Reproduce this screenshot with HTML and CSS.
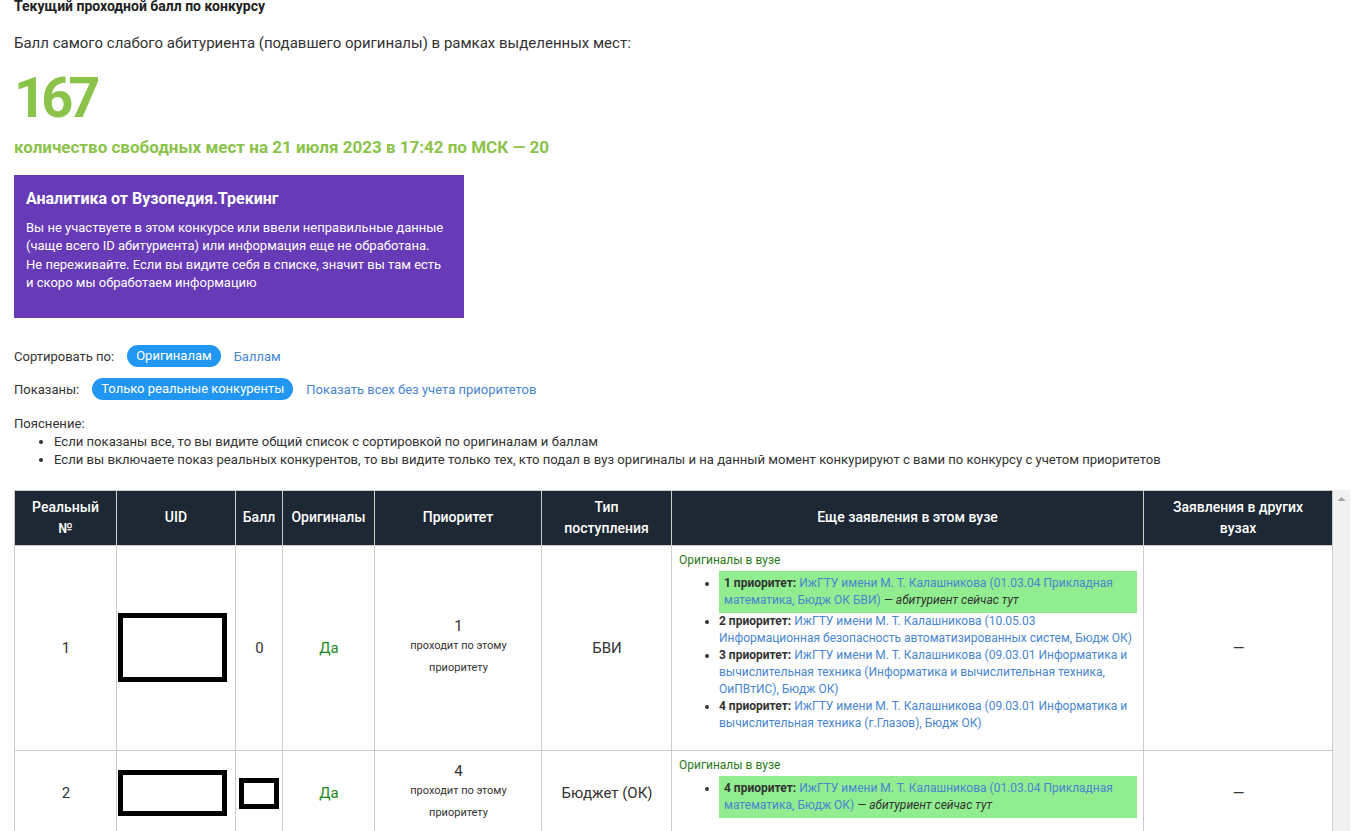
FILE: index.html
```html
<!DOCTYPE html>
<html lang="ru">
<head>
    <meta charset="UTF-8">
    <meta name="viewport" content="width=device-width, initial-scale=1.0">
    <title>Текущий проходной балл по конкурсу</title>
    <link rel="stylesheet" href="styles.css">
</head>
<body>
    <h3 class="title">Текущий проходной балл по конкурсу</h3>
    <p class="lead">Балл самого слабого абитуриента (подавшего оригиналы) в рамках выделенных мест:</p>
    <div class="score">167</div>
    <div class="free">количество свободных мест на 21 июля 2023 в 17:42 по МСК — 20</div>

    <div class="promo">
        <div class="promo-title">Аналитика от Вузопедия.Трекинг</div>
        <p>Вы не участвуете в этом конкурсе или ввели неправильные данные (чаще всего ID абитуриента) или информация еще не обработана. Не переживайте. Если вы видите себя в списке, значит вы там есть и скоро мы обработаем информацию</p>
    </div>

    <div class="filter">
        <span>Сортировать по:</span>
        <span class="pill">Оригиналам</span>
        <a href="#">Баллам</a>
    </div>
    <div class="filter">
        <span>Показаны:</span>
        <span class="pill">Только реальные конкуренты</span>
        <a href="#">Показать всех без учета приоритетов</a>
    </div>

    <div class="note">
        Пояснение:
        <ul>
            <li>Если показаны все, то вы видите общий список с сортировкой по оригиналам и баллам</li>
            <li>Если вы включаете показ реальных конкурентов, то вы видите только тех, кто подал в вуз оригиналы и на данный момент конкурируют с вами по конкурсу с учетом приоритетов</li>
        </ul>
    </div>

    <div class="table-wrap">
        <div class="table-scroll">
            <table class="list">
                <colgroup>
                    <col style="width:102px">
                    <col style="width:119px">
                    <col style="width:47px">
                    <col style="width:92px">
                    <col style="width:167px">
                    <col style="width:130px">
                    <col style="width:472px">
                    <col>
                </colgroup>
                <thead>
                    <tr>
                        <th>Реальный<br>№</th>
                        <th>UID</th>
                        <th>Балл</th>
                        <th>Оригиналы</th>
                        <th>Приоритет</th>
                        <th>Тип<br>поступления</th>
                        <th>Еще заявления в этом вузе</th>
                        <th>Заявления в других<br>вузах</th>
                    </tr>
                </thead>
                <tbody>
                    <tr>
                        <td>1</td>
                        <td class="uid"><span class="hidden hidden-uid"></span></td>
                        <td>0</td>
                        <td class="yes">Да</td>
                        <td>1<div class="passes">проходит по этому приоритету</div></td>
                        <td>БВИ</td>
                        <td class="apps">
                            <div class="apps-label">Оригиналы в вузе</div>
                            <ul>
                                <li class="current"><b>1 приоритет:</b> <a href="#">ИжГТУ имени М. Т. Калашникова (01.03.04 Прикладная математика, Бюдж ОК БВИ)</a> <i>— абитуриент сейчас тут</i></li>
                                <li><b>2 приоритет:</b> <a href="#">ИжГТУ имени М. Т. Калашникова (10.05.03 Информационная безопасность автоматизированных систем, Бюдж ОК)</a></li>
                                <li><b>3 приоритет:</b> <a href="#">ИжГТУ имени М. Т. Калашникова (09.03.01 Информатика и вычислительная техника (Информатика и вычислительная техника, ОиПВтИС), Бюдж ОК)</a></li>
                                <li><b>4 приоритет:</b> <a href="#">ИжГТУ имени М. Т. Калашникова (09.03.01 Информатика и вычислительная техника (г.Глазов), Бюдж ОК)</a></li>
                            </ul>
                        </td>
                        <td>—</td>
                    </tr>
                    <tr>
                        <td>2</td>
                        <td class="uid"><span class="hidden hidden-uid2"></span></td>
                        <td class="score-cell"><span class="hidden hidden-score"></span></td>
                        <td class="yes">Да</td>
                        <td>4<div class="passes">проходит по этому приоритету</div></td>
                        <td>Бюджет (ОК)</td>
                        <td class="apps">
                            <div class="apps-label">Оригиналы в вузе</div>
                            <ul>
                                <li class="current"><b>4 приоритет:</b> <a href="#">ИжГТУ имени М. Т. Калашникова (01.03.04 Прикладная математика, Бюдж ОК)</a> <i>— абитуриент сейчас тут</i></li>
                            </ul>
                        </td>
                        <td>—</td>
                    </tr>
                    <tr>
                        <td>3</td>
                        <td class="uid"><span class="hidden hidden-uid2"></span></td>
                        <td>0</td>
                        <td class="yes">Да</td>
                        <td>1<div class="passes">проходит по этому приоритету</div></td>
                        <td>БВИ</td>
                        <td class="apps">
                            <div class="apps-label">Оригиналы в вузе</div>
                            <ul>
                                <li class="current"><b>1 приоритет:</b> <a href="#">ИжГТУ имени М. Т. Калашникова (01.03.04 Прикладная математика, Бюдж ОК БВИ)</a> <i>— абитуриент сейчас тут</i></li>
                            </ul>
                        </td>
                        <td>—</td>
                    </tr>
                </tbody>
            </table>
        </div>
        <div class="scrollbar">
            <svg class="scroll-up" width="17" height="17" viewBox="0 0 17 17">
                <path d="M4.5 11 L8.5 7 L12.5 11 Z" fill="#a3a3a3"/>
            </svg>
        </div>
    </div>
</body>
</html>
```

FILE: styles.css
```css
body {
    margin: 0;
    padding: 0 6px 0 14px;
    font-family: Roboto, "Noto Sans", sans-serif;
    font-size: 14px;
    color: #333;
}

a {
    color: #4a85d0;
    text-decoration: none;
}

.title {
    margin: -3px 0 0;
    font-size: 14px;
    line-height: 18px;
    font-weight: 700;
    color: #222;
}

.lead {
    margin: 18px 0 0;
    font-size: 15px;
    line-height: 20px;
}

.score {
    margin-top: 15px;
    font-size: 56px;
    line-height: 60px;
    font-weight: 700;
    letter-spacing: -5px;
    color: #8bc34a;
}

.free {
    margin-top: 8px;
    font-size: 17px;
    line-height: 22px;
    font-weight: 700;
    color: #8bc34a;
}

.promo {
    width: 450px;
    box-sizing: border-box;
    margin-top: 17px;
    padding: 14px 16px 26px 12px;
    background: #673ab7;
    color: #fff;
}
.promo-title {
    font-size: 16px;
    line-height: 20px;
    font-weight: 700;
}
.promo p {
    margin: 10px 0 0;
    font-size: 13px;
    line-height: 18.3px;
}

.filter {
    display: flex;
    align-items: center;
    gap: 13px;
    font-size: 13px;
    height: 22px;
}
.promo + .filter {
    margin-top: 27px;
}
.filter + .filter {
    margin-top: 11px;
}
.pill {
    padding: 0 9px;
    line-height: 22px;
    border-radius: 11px;
    background: #2196f3;
    color: #fff;
}

.note {
    margin-top: 15px;
    font-size: 13.1px;
    line-height: 18.5px;
}
.note ul {
    margin: 0;
    padding-left: 40px;
}
.note li:first-child {
    margin-top: -1px;
}

.table-wrap {
    display: flex;
    margin-top: 20px;
    height: 600px;
    overflow: hidden;
}
.table-scroll {
    flex: 1;
}
.scrollbar {
    width: 17px;
    background: #f1f1f1;
}
.scroll-up {
    display: block;
}

.list {
    width: 100%;
    table-layout: fixed;
    border-collapse: collapse;
    font-size: 15px;
}
.list th {
    padding: 6px 6px;
    background: #1e2834;
    color: #fff;
    font-size: 14px;
    font-weight: 500;
    line-height: 21px;
    border: 1px solid #ccc;
}
.list td {
    padding: 6px 6px 6px 7px;
    border: 1px solid #ccc;
    text-align: center;
    vertical-align: middle;
    color: #333;
}
.list .yes {
    color: #1e8a1e;
}
.passes {
    font-size: 11px;
    line-height: 22px;
}

.hidden {
    display: inline-block;
    vertical-align: middle;
    border: 5px solid #000;
    box-sizing: border-box;
}
.hidden-uid {
    width: 109px;
    height: 69px;
}
.hidden-uid2 {
    width: 109px;
    height: 46px;
}
.hidden-score {
    width: 40px;
    height: 31px;
}
.list .uid {
    padding: 0 7px 0 0;
}
.list .score-cell {
    padding: 0 0 0 3px;
    text-align: left;
}

.list .apps {
    text-align: left;
    vertical-align: top;
    font-size: 12px;
    line-height: 17px;
}
.apps-label {
    color: #2a7a1a;
}
.apps ul {
    margin: 2px 0 12px;
    padding-left: 40px;
}
.apps li.current {
    padding: 4px 5px;
    background: #90ee90;
}
.apps b {
    color: #333;
}
.apps i {
    color: #333;
}
```
